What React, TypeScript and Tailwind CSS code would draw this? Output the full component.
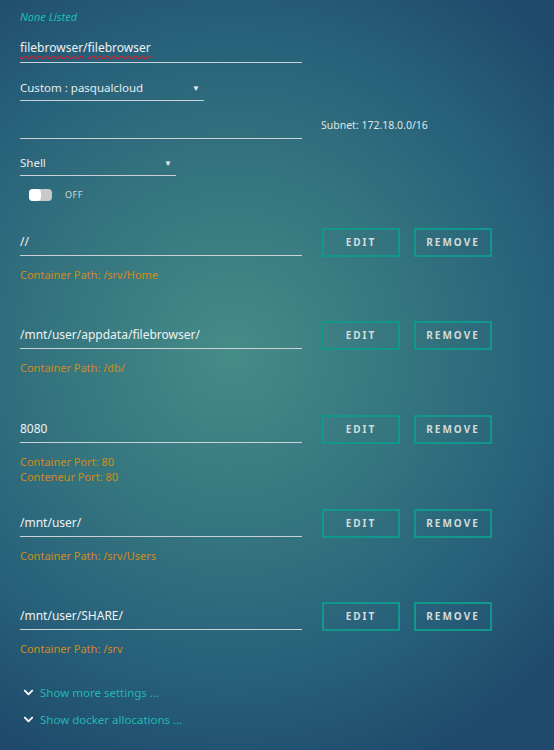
import { FaChevronDown } from "react-icons/fa";

const font = { fontFamily: '"Noto Sans", "Open Sans", sans-serif' };

type Mapping = {
  value: string;
  notes: string[];
  h: string;
};

const mappings: Mapping[] = [
  { value: "//", notes: ["Container Path: /srv/Home"], h: "h-[93px]" },
  { value: "/mnt/user/appdata/filebrowser/", notes: ["Container Path: /db/"], h: "h-[94px]" },
  { value: "8080", notes: ["Container Port: 80", "Conteneur Port: 80"], h: "h-[94px]" },
  { value: "/mnt/user/", notes: ["Container Path: /srv/Users"], h: "h-[93px]" },
  { value: "/mnt/user/SHARE/", notes: ["Container Path: /srv"], h: "h-[83px]" },
];

function ActionButton({ label }: { label: string }) {
  return (
    <button className="w-[78px] h-[29px] border-2 border-[#10988a] bg-transparent text-[#d3dcdc] text-[10px] font-bold tracking-[0.2em] flex items-center justify-center">
      {label}
    </button>
  );
}

function SelectField({ label, width }: { label: string; width: string }) {
  return (
    <div className={`${width} flex items-center justify-between border-b border-[#c9d3d6] leading-[16px] pb-[4px] text-[11.5px] text-[#e6ecec]`}>
      <span>{label}</span>
      <span className="text-[8px] pr-[4px]">▼</span>
    </div>
  );
}

export default function App() {
  return (
    <div
      style={font}
      className="w-[554px] h-[750px] overflow-hidden bg-[radial-gradient(ellipse_80%_60%_at_42%_47%,#468c88_0%,#35757f_40%,#27607a_72%,#1f4a6b_100%)] pl-[20px]"
    >
      {/* image / repository block */}
      <div className="pt-[9px] text-[11px] italic leading-[16px] text-[#1bbfb1]">None Listed</div>

      <div className="mt-[15px] w-[282px] border-b border-[#c9d3d6] leading-[16px] pb-[6px] text-[12px] text-[#eef2f2]">
        <span className="underline decoration-wavy decoration-[#d2202a] underline-offset-[3px]">filebrowser</span>/
        <span className="underline decoration-wavy decoration-[#d2202a] underline-offset-[3px]">filebrowser</span>
      </div>

      <div className="mt-[17px]">
        <SelectField label="Custom : pasqualcloud" width="w-[184px]" />
      </div>

      <div className="mt-[15px] flex items-start">
        <div className="w-[282px] h-[23px] border-b border-[#c9d3d6]" />
        <div className="ml-[19px] mt-[1px] leading-[16px] text-[10.5px] text-[#dde6e6]">Subnet: 172.18.0.0/16</div>
      </div>

      <div className="mt-[16px]">
        <SelectField label="Shell" width="w-[156px]" />
      </div>

      <div className="mt-[12px] ml-[9px] flex items-center gap-[13px]">
        <div className="w-[23px] h-[12px] rounded-[4px] bg-[#c9c9c9] flex items-center">
          <div className="w-[12px] h-[12px] rounded-[4px] bg-white" />
        </div>
        <span className="text-[9px] tracking-[0.06em] text-[#cfdada]">OFF</span>
      </div>

      {/* port and path mappings */}
      <div className="mt-[26px]">
        {mappings.map((m) => (
          <div key={m.value} className={`${m.h} flex items-start`}>
            <div className="w-[282px]">
              <div className="h-[28px] border-b border-[#c9d3d6] pt-[6px] leading-[16px] text-[12px] text-[#eef2f2]">
                {m.value}
              </div>
              <div className="mt-[11px] text-[11px] leading-[15px] text-[#d18b1a]">
                {m.notes.map((n) => (
                  <div key={n}>{n}</div>
                ))}
              </div>
            </div>
            <div className="ml-[20px] flex gap-[14px]">
              <ActionButton label="EDIT" />
              <ActionButton label="REMOVE" />
            </div>
          </div>
        ))}
      </div>

      <div className="flex flex-col gap-[11px] text-[11.5px] leading-[16px] text-[#1fb9b0]">
        <div className="flex items-center gap-[5px]">
          <FaChevronDown className="w-[13px] h-[11px] text-white ml-[2px]" />
          <span>Show more settings ...</span>
        </div>
        <div className="flex items-center gap-[5px]">
          <FaChevronDown className="w-[13px] h-[11px] text-white ml-[2px]" />
          <span>Show docker allocations ...</span>
        </div>
      </div>
    </div>
  );
}
